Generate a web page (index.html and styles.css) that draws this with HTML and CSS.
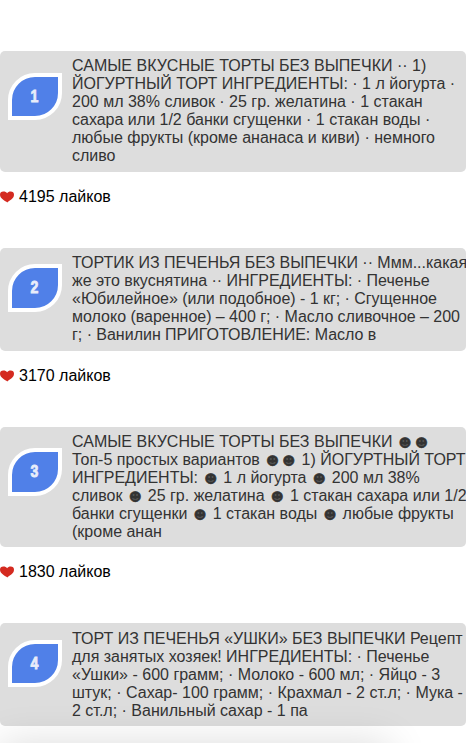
FILE: index.html
```
<!DOCTYPE html>
<html lang="ru">
<head>
<meta charset="utf-8">
<title>Торты без выпечки</title>
<link rel="stylesheet" href="styles.css">
</head>
<body>
<svg width="0" height="0" class="defs"><symbol id="heart" viewBox="0 0 14 12"><path d="M7.300 11.600C5.500 9.800 0 8 0 3.800 0 1.800 1.300.6 3.300.6 5.100.6 6.500 1.300 7.100 2.300 7.900 1.200 9 .6 10.700.6 12.700.6 14 1.800 14 3.800 14 8 9 9.600 7.300 11.600Z"/></symbol></svg>
<div class="page">
<main class="list">
  <article class="post post-1">
    <div class="card">
      <div class="badge"><span>1</span></div>
      <p class="text">САМЫЕ ВКУСНЫЕ ТОРТЫ БЕЗ ВЫПЕЧКИ ·· 1)<br>ЙОГУРТНЫЙ ТОРТ ИНГРЕДИЕНТЫ: · 1 л йогурта ·<br>200 мл 38% сливок · 25 гр. желатина · 1 стакан<br>сахара или 1/2 банки сгущенки · 1 стакан воды ·<br>любые фрукты (кроме ананаса и киви) · немного<br>сливо</p>
    </div>
    <p class="likes"><svg class="heart"><use href="#heart"/></svg>4195 лайков</p>
  </article>
  <article class="post post-2">
    <div class="card">
      <div class="badge"><span>2</span></div>
      <p class="text">ТОРТИК ИЗ ПЕЧЕНЬЯ БЕЗ ВЫПЕЧКИ ·· Ммм...какая<br>же это вкуснятина ·· ИНГРЕДИЕНТЫ: · Печенье<br>«Юбилейное» (или подобное) - 1 кг; · Сгущенное<br>молоко (варенное) – 400 г; · Масло сливочное – 200<br>г; · Ванилин ПРИГОТОВЛЕНИЕ: Масло в</p>
    </div>
    <p class="likes"><svg class="heart"><use href="#heart"/></svg>3170 лайков</p>
  </article>
  <article class="post post-3">
    <div class="card">
      <div class="badge"><span>3</span></div>
      <p class="text">САМЫЕ ВКУСНЫЕ ТОРТЫ БЕЗ ВЫПЕЧКИ <i>☻</i><i>☻</i><br>Топ-5 простых вариантов <i>☻</i><i>☻</i> 1) ЙОГУРТНЫЙ ТОРТ<br>ИНГРЕДИЕНТЫ: <i>☻</i> 1 л йогурта <i>☻</i> 200 мл 38%<br>сливок <i>☻</i> 25 гр. желатина <i>☻</i> 1 стакан сахара или 1/2<br>банки сгущенки <i>☻</i> 1 стакан воды <i>☻</i> любые фрукты<br>(кроме анан</p>
    </div>
    <p class="likes"><svg class="heart"><use href="#heart"/></svg>1830 лайков</p>
  </article>
  <article class="post post-4">
    <div class="card">
      <div class="badge"><span>4</span></div>
      <p class="text">ТОРТ ИЗ ПЕЧЕНЬЯ «УШКИ» БЕЗ ВЫПЕЧКИ Рецепт<br>для занятых хозяек! ИНГРЕДИЕНТЫ: · Печенье<br>«Ушки» - 600 грамм; · Молоко - 600 мл; · Яйцо - 3<br>штук; · Сахар- 100 грамм; · Крахмал - 2 ст.л; · Мука -<br>2 ст.л; · Ванильный сахар - 1 па</p>
    </div>
  </article>
</main>
<div class="shade"></div>
</div>
</body>
</html>
```
FILE: styles.css
```
* { box-sizing: border-box; }
body {
  margin: 0;
  background: #fff;
  color: #000;
  font: 16px/18px "Liberation Sans", Arial, sans-serif;
}
.defs { position: absolute; }
.page {
  position: relative;
  height: 743px;
  overflow: hidden;
}
.list { padding-top: 51px; }
.post { height: 197px; }
.post-2 { height: 179px; }
.post-3 { height: 196px; }
.post-4 { height: 103px; }
.card {
  display: flex;
  align-items: flex-start;
  height: 121px;
  padding: 6px 0 0 8px;
  border-radius: 5px;
  background: #ddd;
}
.post-2 .card, .post-4 .card { height: 103px; }
.post-4 .card { padding-top: 7px; }
.post-3 .card { height: 120px; }
.badge {
  flex: none;
  display: flex;
  align-items: center;
  justify-content: center;
  width: 54px;
  height: 47px;
  margin: 16px 10px 0 0;
  border: 4px solid #fff;
  border-radius: 27px 0;
  background: #5080e8;
  color: #e8edfa;
  font-size: 16px;
  font-weight: bold;
  -webkit-text-stroke: 0.8px #e8edfa;
}
.badge span { margin-right: 1px; transform: scaleX(0.88); }
.post-2 .badge { height: 48px; margin-top: 10px; }
.post-3 .badge { height: 48px; margin-top: 15px; }
.post-4 .badge { margin-top: 10px; }
.text { margin: 0; color: #333; white-space: nowrap; }
.post-2 .text { word-spacing: -0.1px; }
.text i {
  display: inline-block;
  width: 16.4px;
  height: 12px;
  font: 12px/12px "DejaVu Sans", sans-serif;
  text-align: center;
  -webkit-text-stroke: 0.6px #333;
}
.likes {
  display: flex;
  align-items: center;
  margin: 16px 0 0;
}
.heart {
  width: 14px;
  height: 12px;
  margin-right: 5px;
  fill: #d42a20;
}
.shade {
  position: absolute;
  left: 0;
  top: 743px;
  width: 390px;
  height: 50px;
  box-shadow: 0 0 40px rgba(0, 0, 0, 0.14);
}
```
